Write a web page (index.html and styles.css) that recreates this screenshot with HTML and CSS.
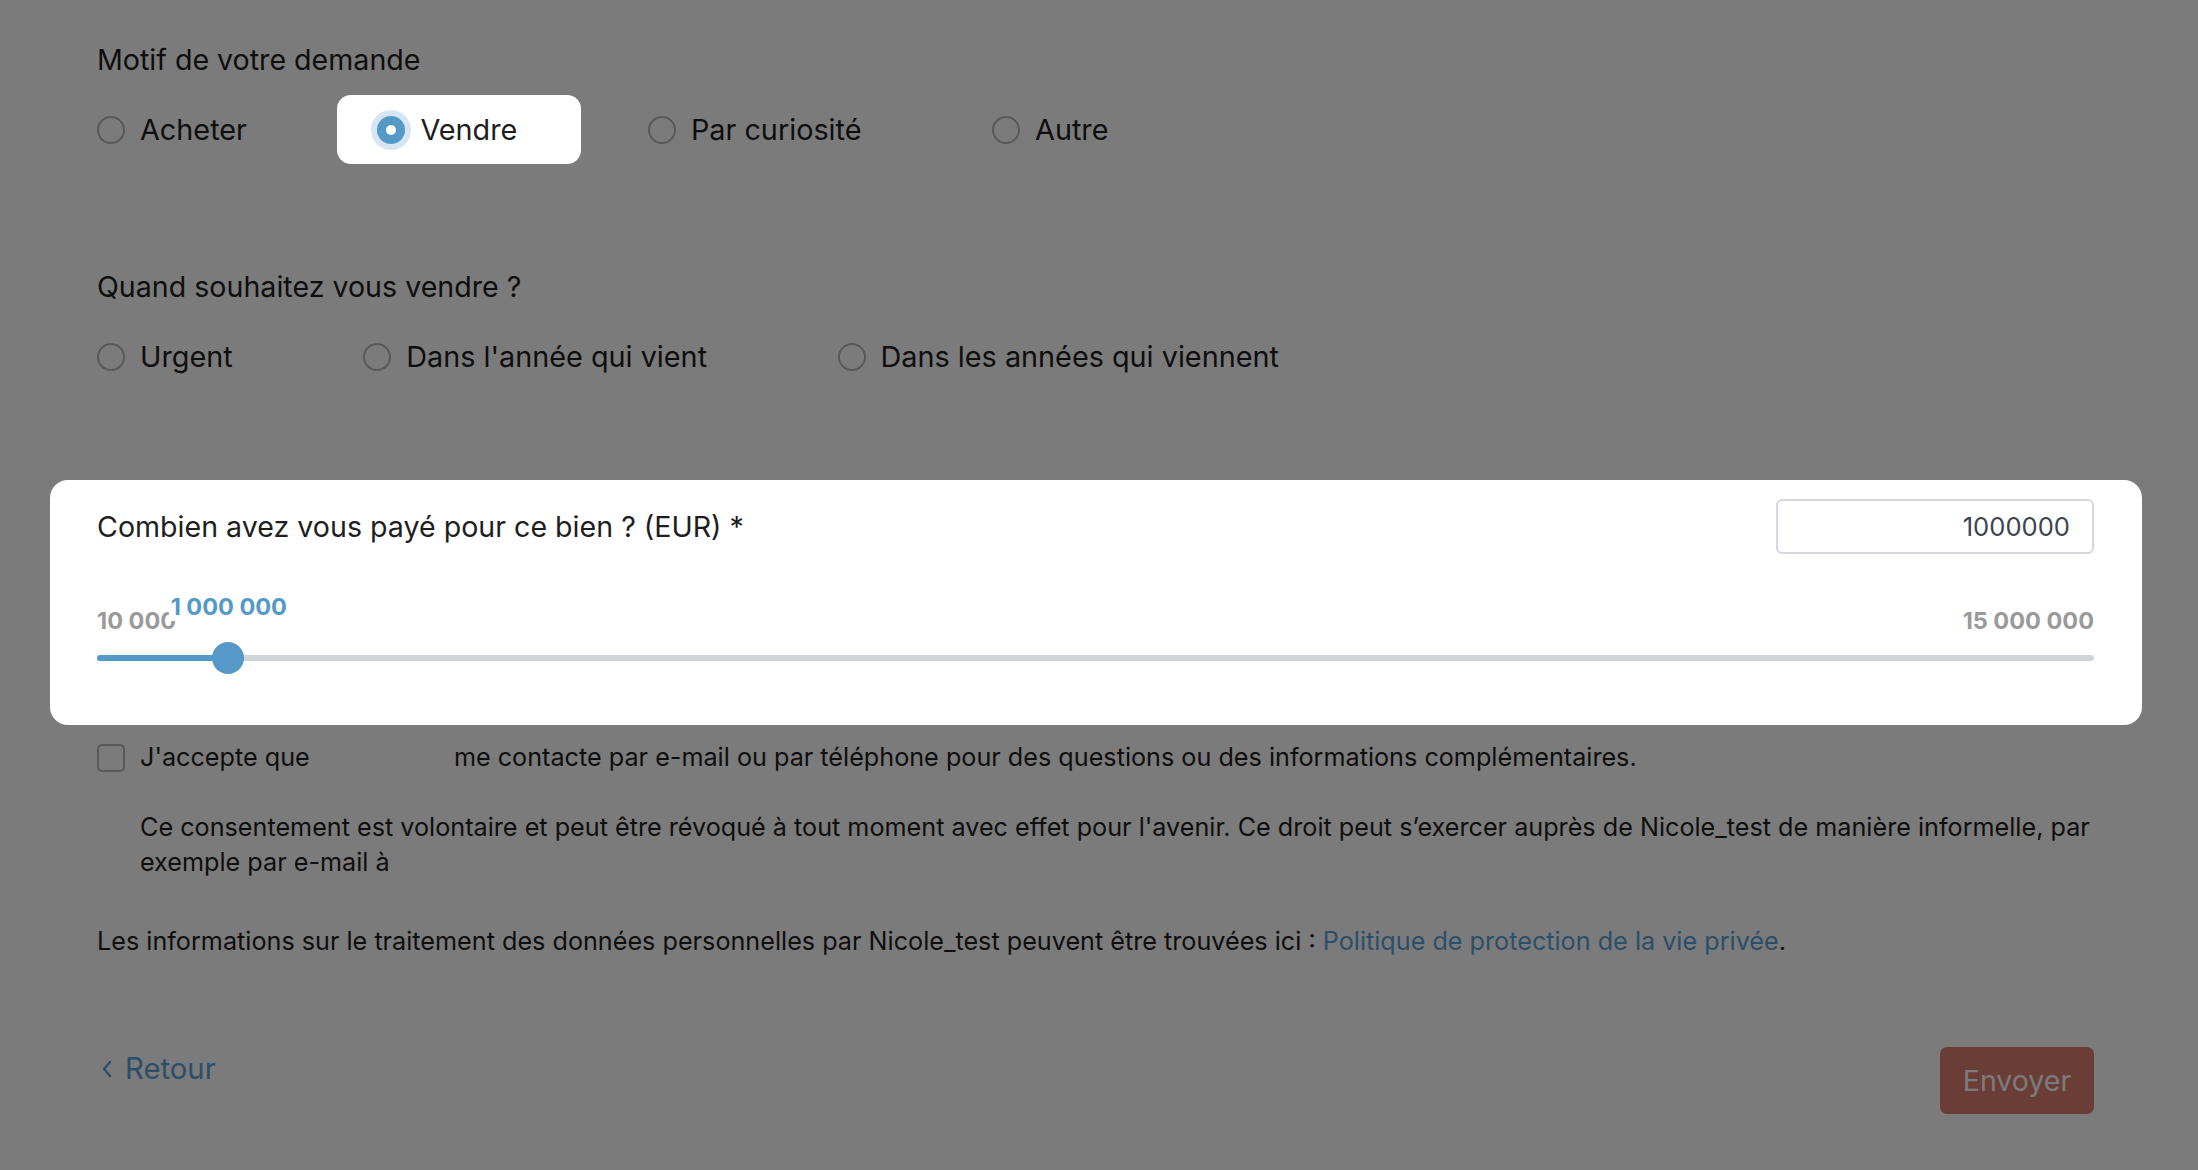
FILE: index.html
```html
<!DOCTYPE html>
<html lang="fr">

<head>
  <meta charset="UTF-8" />
  <meta name="viewport" content="width=device-width, initial-scale=1.0" />
  <title>Estimation - Motif de votre demande</title>
  <link rel="stylesheet" href="styles.css">
</head>

<body>
  <div class="tour-overlay"></div>

  <form class="page">
    <div class="question">
      <div class="question-label">Motif de votre demande</div>
      <div class="options">
        <label class="option"><span class="radio"></span>Acheter</label>
        <label class="option highlight"><span class="radio checked"></span>Vendre</label>
        <label class="option"><span class="radio"></span>Par curiosité</label>
        <label class="option"><span class="radio"></span>Autre</label>
      </div>
    </div>

    <div class="question">
      <div class="question-label">Quand souhaitez vous vendre ?</div>
      <div class="options">
        <label class="option"><span class="radio"></span>Urgent</label>
        <label class="option"><span class="radio"></span>Dans l'année qui vient</label>
        <label class="option"><span class="radio"></span>Dans les années qui viennent</label>
      </div>
    </div>

    <div class="price-card highlight">
      <div class="price-header">
        <div class="price-title">Combien avez vous payé pour ce bien ? (EUR) *</div>
        <input class="price-input" type="text" value="1000000">
      </div>
      <div class="slider-labels">
        <span>10 000</span>
        <span>15 000 000</span>
      </div>
      <div class="slider">
        <div class="slider-track">
          <div class="slider-fill" style="width: 6.6%"></div>
        </div>
        <div class="slider-thumb" style="left: 6.6%"></div>
        <div class="slider-value" style="left: 6.6%">1 000 000</div>
      </div>
    </div>

    <label class="consent">
      <span class="checkbox"></span>
      <span>J'accepte que <span class="company-name"></span> me contacte par e-mail ou par téléphone pour des questions ou des informations complémentaires.</span>
    </label>

    <p class="consent-note">Ce consentement est volontaire et peut être révoqué à tout moment avec effet pour l'avenir. Ce droit peut s’exercer auprès de Nicole_test de manière informelle, par exemple par e-mail à</p>

    <p class="privacy">Les informations sur le traitement des données personnelles par Nicole_test peuvent être trouvées ici : <a href="#">Politique de protection de la vie privée</a>.</p>

    <div class="form-footer">
      <a class="back-link" href="#">
        <svg width="12" height="18" viewBox="0 0 12 18"><polyline points="9,2 3,9 9,16" fill="none" stroke="currentColor" stroke-width="2.4" stroke-linecap="round" stroke-linejoin="round"/></svg>
        Retour
      </a>
      <button class="submit" type="button">Envoyer</button>
    </div>
  </form>
</body>

</html>
```

FILE: styles.css
```css
* {
  box-sizing: border-box;
}

body {
  margin: 0;
  font-family: Inter, "Noto Sans", sans-serif;
  font-size: 25.2px;
  line-height: 35px;
  color: #1e1e1e;
  background: #fff;
}

.tour-overlay {
  position: fixed;
  top: 0;
  left: 0;
  right: 0;
  bottom: 0;
  background: rgba(0, 0, 0, 0.518);
  z-index: 1;
}

.highlight {
  position: relative;
  z-index: 2;
  background: #fff;
}

.page {
  padding: 40px 104px 0 97px;
}

.question-label,
.option,
.price-title {
  font-size: 28.6px;
  line-height: 40px;
}

.option {
  font-size: 28.8px;
}

.question + .question {
  margin-top: 103px;
}

.question-label {
  margin-bottom: 15px;
}

.options {
  display: flex;
  gap: 26.5px;
  margin-left: -40px;
}

.option {
  display: flex;
  align-items: center;
  gap: 15px;
  padding: 14.5px 64px 14.5px 40px;
  border-radius: 14px;
  cursor: pointer;
}

.radio {
  width: 28px;
  height: 28px;
  border: 2px solid #b8b8b8;
  border-radius: 50%;
  flex-shrink: 0;
}

.radio.checked {
  border: none;
  background: #5599c8;
  box-shadow: 0 0 0 6px #d6e6f2;
  display: flex;
  align-items: center;
  justify-content: center;
}

.radio.checked::after {
  content: "";
  width: 10px;
  height: 10px;
  border-radius: 50%;
  background: #fff;
}

.price-card {
  margin: 89px -48px 0 -47px;
  padding: 19px 48px 51px 47px;
  border-radius: 18px;
}

.price-header {
  display: flex;
  justify-content: space-between;
  align-items: center;
}

.price-input {
  width: 318px;
  height: 55px;
  border: 2px solid #d5d9df;
  border-radius: 6px;
  padding: 0 22px;
  font-family: inherit;
  font-size: 25.6px;
  color: #3d4450;
  text-align: right;
}

.slider-labels {
  display: flex;
  justify-content: space-between;
  margin-top: 52.5px;
  font-size: 23.5px;
  line-height: 28px;
  font-weight: 700;
  color: #9a9a9a;
}

.slider {
  position: relative;
  height: 32px;
  margin-top: 7.5px;
  display: flex;
  align-items: center;
}

.slider-track {
  width: 100%;
  height: 6px;
  border-radius: 3px;
  background: #d1d5db;
}

.slider-fill {
  height: 100%;
  border-radius: 3px;
  background: #5599c8;
}

.slider-thumb {
  position: absolute;
  top: 0;
  width: 32px;
  height: 32px;
  margin-left: -17px;
  border-radius: 50%;
  background: #5599c8;
}

.slider-value {
  position: absolute;
  top: -49px;
  transform: translateX(-50%);
  padding: 0 2px;
  background: #fff;
  font-size: 23.5px;
  line-height: 28px;
  font-weight: 700;
  color: #5599c8;
  white-space: nowrap;
}

.consent {
  display: flex;
  align-items: flex-start;
  gap: 15px;
  margin-top: 14.5px;
}

.checkbox {
  width: 28px;
  height: 28px;
  margin-top: 4px;
  border: 2px solid #b8b8b8;
  border-radius: 5px;
  flex-shrink: 0;
}

.company-name {
  display: inline-block;
  width: 130px;
}

.consent-note {
  margin: 35px 0 0 43px;
}

.privacy {
  margin: 44px 0 0;
}

.privacy a,
.back-link {
  color: #5aa3da;
  text-decoration: none;
}

.form-footer {
  display: flex;
  justify-content: space-between;
  align-items: flex-start;
  margin-top: 88px;
}

.back-link {
  display: flex;
  align-items: center;
  gap: 12px;
  margin: 3px 0 0 4px;
  font-size: 29.3px;
  line-height: 38px;
}

.submit {
  width: 154px;
  height: 67px;
  border: none;
  border-radius: 7px;
  background: #dc7e71;
  color: #fff;
  font-family: inherit;
  font-size: 28.5px;
}
```
